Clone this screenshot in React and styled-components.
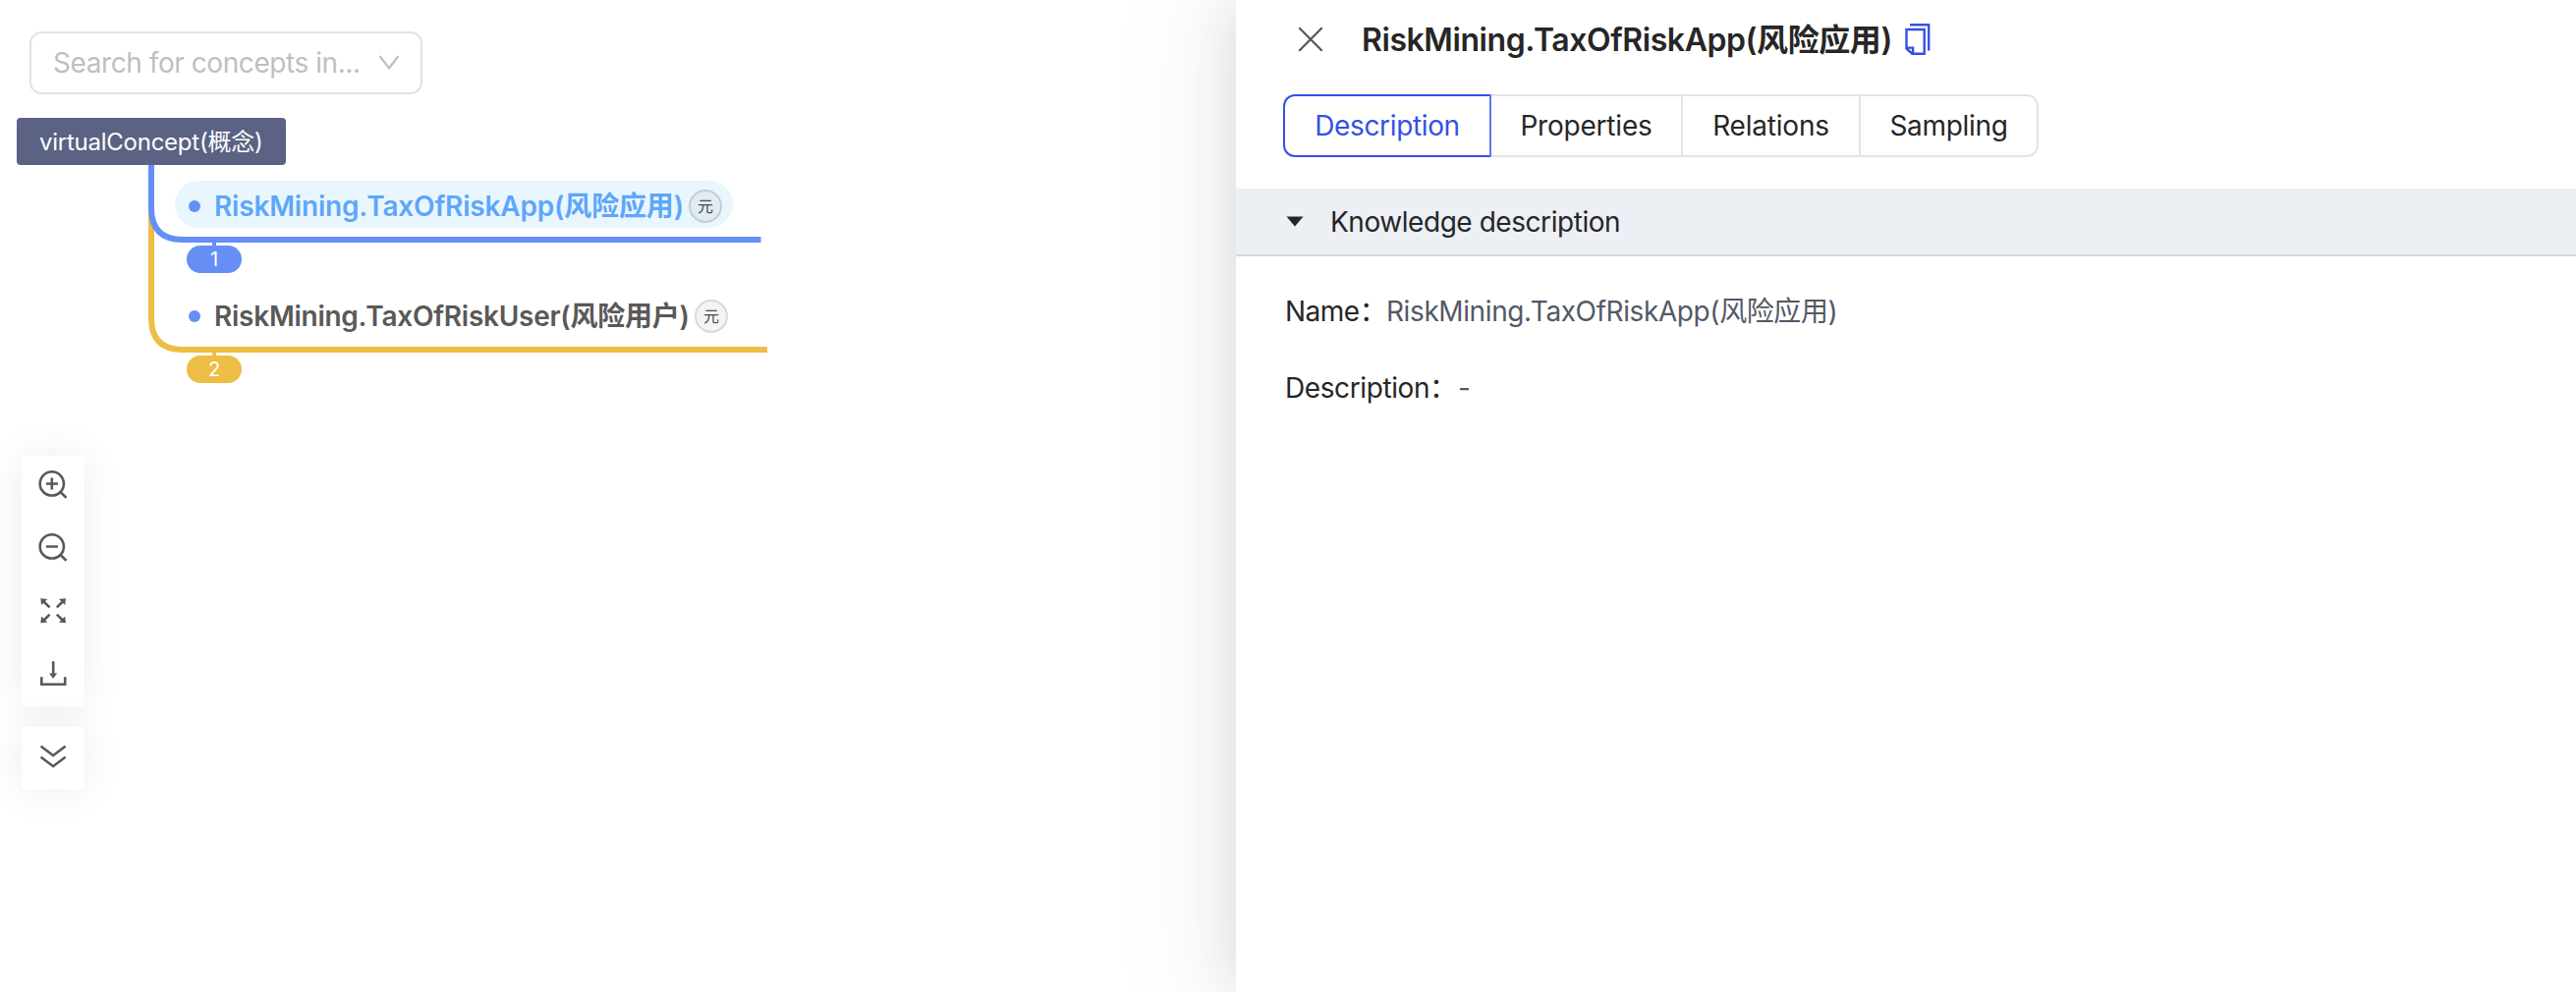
import React from "react";
import styled, { createGlobalStyle, css } from "styled-components";

const Global = createGlobalStyle`
  *, *::before, *::after { box-sizing: border-box; }
  html, body { margin: 0; background: #fff; }
  body {
    font-family: Inter, "Noto Sans CJK SC", sans-serif;
    font-size: 28px;
    color: #262626;
  }
`;

const Page = styled.div`
  display: flex;
  width: 100%;
  height: 1010px;
  overflow: hidden;
  background: #fff;
`;

const Workspace = styled.main`
  flex: 0 0 1258px;
  display: flex;
  flex-direction: column;
  align-items: flex-start;
  padding-top: 32px;
`;

const Search = styled.div`
  display: flex;
  align-items: center;
  justify-content: space-between;
  width: 400px;
  height: 64px;
  margin-left: 30px;
  padding: 0 21px 0 22px;
  border: 2px solid #e3e3e4;
  border-radius: 12px;
  background: #fff;
  color: #bfbfbf;
`;

const Label = styled.span`
  white-space: nowrap;
  letter-spacing: ${(p) => p.$track || 0}px;
`;

const Graph = styled.section`
  position: relative;
  width: 800px;
  height: 344px;
  margin-top: 24px;
`;

const Links = styled.svg`
  position: absolute;
  inset: 0;
`;

const RootNode = styled.div`
  position: absolute;
  left: 17px;
  top: 0;
  width: 274px;
  height: 48px;
  padding-left: 23px;
  border-radius: 4px;
  background: #5b6283;
  color: #fff;
  font-size: 24px;
  line-height: 50px;
`;

const ConceptNode = styled.div`
  position: absolute;
  left: 178px;
  top: ${(p) => p.$top}px;
  display: flex;
  align-items: center;
  width: ${(p) => p.$width}px;
  height: 48px;
  padding: 4px 11px 0 14px;
  border-radius: 24px;
  font-weight: 600;
  color: #595959;
  line-height: 44px;
  ${(p) =>
    p.$selected &&
    css`
      background: #e9f6fe;
      color: #5ea6fa;
    `}
`;

const Dot = styled.i`
  flex: none;
  width: 12px;
  height: 12px;
  margin-right: 14px;
  border-radius: 50%;
  background: #668ff5;
`;

const Kind = styled.span`
  display: grid;
  place-items: center;
  flex: none;
  width: 34px;
  height: 34px;
  margin-left: auto;
  border: 2px solid ${(p) => (p.$selected ? "#c4ced6" : "#d9d9d9")};
  border-radius: 50%;
  background: ${(p) => (p.$selected ? "#e0ebf3" : "#f4f4f4")};
  color: #4d4d4d;
  font-size: 16px;
  font-weight: 400;
  line-height: 16px;
`;

const Count = styled.div`
  position: absolute;
  left: 190px;
  top: ${(p) => p.$top}px;
  width: 56px;
  height: 28px;
  border-radius: 14px;
  background: ${(p) => p.$color};
  color: #fff;
  font-size: 20px;
  line-height: 28px;
  text-align: center;
`;

const Tools = styled.div`
  display: flex;
  flex-direction: column;
  width: 64px;
  margin: 0 0 20px 22px;
  border-radius: 4px;
  background: #fff;
  box-shadow: 0 0 40px rgba(0, 0, 0, 0.08);
`;

const ToolButton = styled.button`
  display: grid;
  place-items: center;
  width: 64px;
  height: 64px;
  padding: 0 0 ${(p) => p.$lift || 0}px;
  border: 0;
  background: none;
  color: #595959;
`;

const Panel = styled.aside`
  flex: 1;
  height: 1010px;
  background: #fff;
  box-shadow: -12px 0 32px -16px rgba(0, 0, 0, 0.08),
    -18px 0 56px rgba(0, 0, 0, 0.05), -24px 0 96px 32px rgba(0, 0, 0, 0.03);
`;

const Header = styled.header`
  display: flex;
  align-items: center;
  height: 80px;
  padding-left: 62px;
`;

const Title = styled.h1`
  margin: 2px 13px 0 38px;
  font-size: 32px;
  font-weight: 600;
  line-height: 44px;
`;

const Tabs = styled.nav`
  display: flex;
  height: 64px;
  margin: 16px 0 32px 48px;
`;

const Tab = styled.button`
  width: ${(p) => p.$width}px;
  padding: 0;
  border: 2px solid #e3e4e6;
  border-left-width: 0;
  background: #fff;
  color: #262626;
  font: inherit;
  &:last-child {
    border-radius: 0 12px 12px 0;
  }
  ${(p) =>
    p.$active &&
    css`
      border: 2px solid #3451e4;
      border-right-color: #5c78ee;
      border-radius: 12px 0 0 12px;
      color: #3451e4;
    `}
`;

const SectionHeader = styled.div`
  display: flex;
  align-items: center;
  height: 69px;
  padding-left: 51px;
  border-bottom: 2px solid #d5d7da;
  background: #eceff4;
`;

const SectionTitle = styled.h2`
  margin: 0 0 0 27px;
  font-size: 28px;
  font-weight: 400;
`;

const Fields = styled.dl`
  display: flex;
  flex-direction: column;
  gap: 34px;
  margin: 0;
  padding: 34px 0 0 50px;
`;

const Field = styled.div`
  display: flex;
  height: 44px;
  line-height: 44px;
`;

const FieldName = styled.dt`
  width: ${(p) => p.$width}px;
`;

const FieldValue = styled.dd`
  margin: 0;
  color: #525966;
`;

const ToolIcon = ({ children }) => (
  <svg width="32" height="32" viewBox="0 0 32 32" fill="none" stroke="currentColor" strokeWidth="2.6">
    {children}
  </svg>
);

const ZoomIn = () => (
  <ToolIcon>
    <circle cx="14.8" cy="14.4" r="12.1" />
    <path d="M23.2 22.6L29.5 28.8M14.8 8.4v12.2M8.9 14.5H21" />
  </ToolIcon>
);

const ZoomOut = () => (
  <ToolIcon>
    <circle cx="14.8" cy="14.4" r="12.1" />
    <path d="M23.2 22.6L29.5 28.8M8.9 14.5H21" />
  </ToolIcon>
);

const Fit = () => (
  <ToolIcon>
    <path d="M6 6l6.6 6.4M26.4 6l-6.6 6.4M6 26l6.6-6.4M26.4 26l-6.6-6.4" />
    <path
      stroke="none"
      fill="currentColor"
      d="M3.3 3.3l7 .8-6.2 6zM29 3.3l-7 .8 6.2 6zM3.3 28.2l7-.8-6.2-6zM29 28.2l-7-.8 6.2-6z"
    />
  </ToolIcon>
);

const Download = () => (
  <ToolIcon>
    <path d="M4.3 19.3v7.5h23.9v-7.5M16.2 3.2v14" />
    <path stroke="none" fill="currentColor" d="M12 15.4h8.2l-4.1 5.6z" />
  </ToolIcon>
);

const Expand = () => (
  <ToolIcon>
    <path d="M3.6 3.8l12.5 9.4 12.5-9.4M3.6 14.8l12.5 9.4 12.5-9.4" />
  </ToolIcon>
);

const Close = () => (
  <svg width="28" height="28" viewBox="0 0 28 28" fill="none" stroke="#595959" strokeWidth="2.3">
    <path d="M2.3 2.3L25.7 25.7M25.7 2.3L2.3 25.7" />
  </svg>
);

const Copy = () => (
  <svg width="26" height="32" viewBox="0 0 26 32" fill="none" stroke="#3451e4" strokeWidth="2.4">
    <path d="M5 1.2h19.2v26.4M1.5 6h18.2v24.7H7.4L1.5 25.4zM1.5 24.6h6.6v6" />
  </svg>
);

export default function App() {
  return (
    <>
      <Global />
      <Page>
        <Workspace>
          <Search>
            <Label $track={-0.43}>Search for concepts in...</Label>
            <svg width="22" height="16" viewBox="0 0 22 16" fill="none" stroke="#bfbfbf" strokeWidth="2.2">
              <path d="M1.5 1L11 13.5 20.5 1" />
            </svg>
          </Search>
          <Graph>
            <Links width="800" height="344" fill="none" strokeWidth="6">
              <path stroke="#edbe45" d="M154 48V204Q154 236 186 236H781" />
              <path stroke="#668ff5" d="M154 48V92Q154 124 186 124H774.5" />
              <path stroke="#668ff5" strokeWidth="4" d="M218 124v8" />
              <path stroke="#edbe45" strokeWidth="4" d="M218 236v8" />
            </Links>
            <RootNode>
              <Label $track={-0.25}>virtualConcept(概念)</Label>
            </RootNode>
            <ConceptNode $top={64} $width={568} $selected>
              <Dot />
              <Label $track={-0.18}>RiskMining.TaxOfRiskApp(风险应用)</Label>
              <Kind $selected>元</Kind>
            </ConceptNode>
            <Count $top={130} $color="#668ff5">1</Count>
            <ConceptNode $top={176} $width={574}>
              <Dot />
              <Label $track={-0.26}>RiskMining.TaxOfRiskUser(风险用户)</Label>
              <Kind>元</Kind>
            </ConceptNode>
            <Count $top={242} $color="#edbe45">2</Count>
          </Graph>
          <Tools>
            <ToolButton $lift={4}><ZoomIn /></ToolButton>
            <ToolButton $lift={4}><ZoomOut /></ToolButton>
            <ToolButton $lift={4}><Fit /></ToolButton>
            <ToolButton $lift={4}><Download /></ToolButton>
          </Tools>
          <Tools>
            <ToolButton><Expand /></ToolButton>
          </Tools>
        </Workspace>
        <Panel>
          <Header>
            <Close />
            <Title><Label $track={-0.42}>RiskMining.TaxOfRiskApp(风险应用)</Label></Title>
            <Copy />
          </Header>
          <Tabs>
            <Tab $width={212} $active><Label $track={-0.35}>Description</Label></Tab>
            <Tab $width={195}><Label $track={-0.2}>Properties</Label></Tab>
            <Tab $width={181}><Label $track={-0.2}>Relations</Label></Tab>
            <Tab $width={181}><Label $track={-0.3}>Sampling</Label></Tab>
          </Tabs>
          <SectionHeader>
            <svg width="18" height="11" viewBox="0 0 18 11" fill="#262626">
              <path d="M0.5 0.5h17L9 10.6z" />
            </svg>
            <SectionTitle><Label $track={-0.45}>Knowledge description</Label></SectionTitle>
          </SectionHeader>
          <Fields>
            <Field>
              <FieldName $width={103}><Label $track={-0.5}>Name：</Label></FieldName>
              <FieldValue><Label $track={-0.4}>RiskMining.TaxOfRiskApp(风险应用)</Label></FieldValue>
            </Field>
            <Field>
              <FieldName $width={176}><Label $track={-0.4}>Description：</Label></FieldName>
              <FieldValue>-</FieldValue>
            </Field>
          </Fields>
        </Panel>
      </Page>
    </>
  );
}
